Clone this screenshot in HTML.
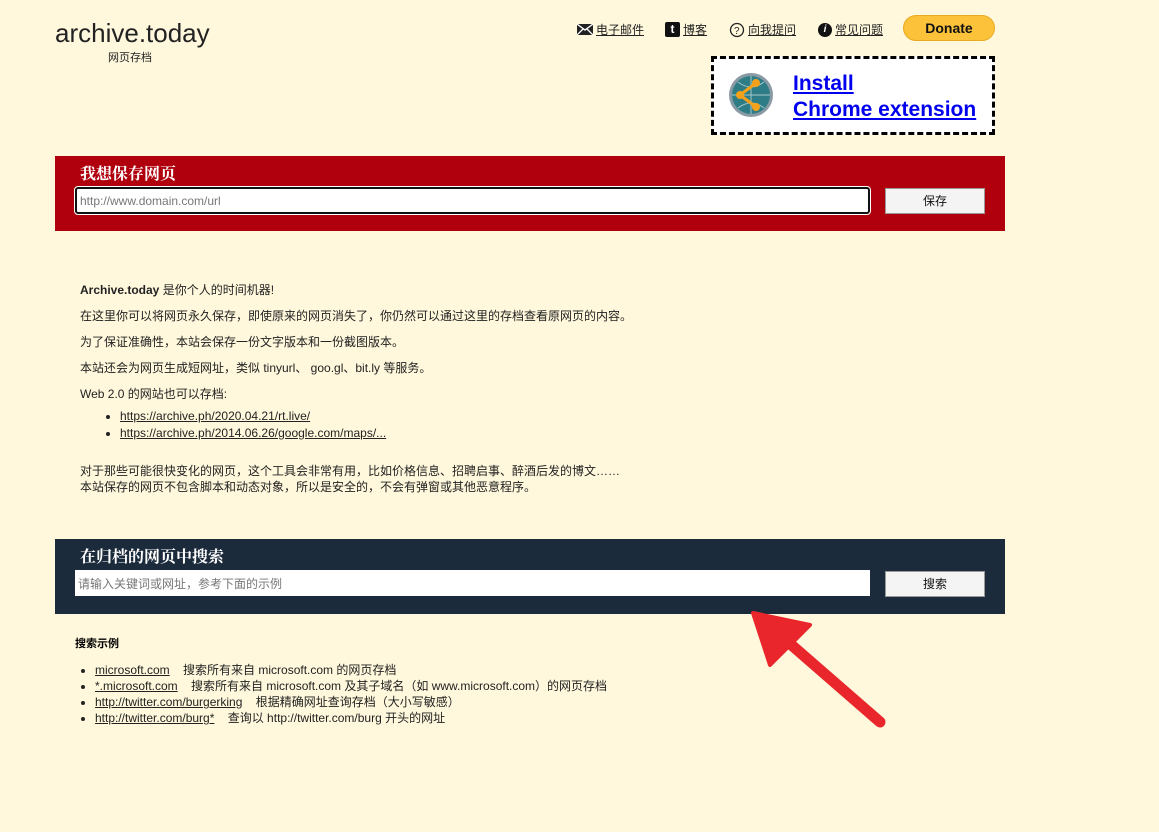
<!DOCTYPE html>
<html><head><meta charset="utf-8">
<style>
*{margin:0;padding:0;box-sizing:border-box}
body{width:1159px;height:832px;background:#fff8dc;font-family:"Liberation Sans","Noto Sans CJK SC",sans-serif;position:relative;overflow:hidden;color:#000}
.a{position:absolute}
a{color:#000}
.t{font-size:12px;color:#222}
.nav{font-size:12px;top:21px;display:flex;align-items:center;gap:3px}
.nav a{color:#222}
.band{position:absolute;left:55px;width:950px;height:75px}
.band h2{position:absolute;left:25px;top:5px;font-size:16px;color:#fff;font-family:"Noto Serif CJK SC",serif;font-weight:bold}
.inp{position:absolute;left:20px;width:795px;height:27px;background:#fff;font-size:12px;color:#777;padding:5px 3px}
.btn{position:absolute;left:830px;width:100px;height:26px;background:#f4f4f4;border:1px solid #999;font-size:12px;text-align:center;line-height:24px;color:#111}
ul{list-style:disc}
</style></head><body>
<div class="a" style="left:55px;top:18px;font-size:26px;color:#222">archive.today</div>
<div class="a" style="left:108px;top:49px;font-size:11px;color:#222">网页存档</div>

<div class="a nav" style="left:577px"><svg width="16" height="11"><rect width="16" height="11" fill="#222"/><path d="M0 0L8 6L16 0M0 11L6 5M16 11L10 5" stroke="#fff" stroke-width="1.3" fill="none"/></svg><a href="#">电子邮件</a></div>
<div class="a nav" style="left:665px"><span style="display:inline-block;width:15px;height:15px;background:#111;border-radius:2px;color:#fff;font-weight:bold;font-size:12px;text-align:center;line-height:15px">t</span><a href="#">博客</a></div>
<div class="a nav" style="left:729px"><svg width="16" height="16"><circle cx="8" cy="8" r="6.5" fill="none" stroke="#222" stroke-width="1.3"/><text x="5" y="12" font-size="10" fill="#222">?</text></svg><a href="#">向我提问</a></div>
<div class="a nav" style="left:818px"><span style="display:inline-block;width:14px;height:14px;background:#111;border-radius:50%;color:#fff;font-weight:bold;font-size:10px;text-align:center;line-height:14px;font-style:italic">i</span><a href="#">常见问题</a></div>
<div class="a" style="left:903px;top:15px;width:92px;height:26px;background:#fcc23a;border-radius:13px;border:1px solid #e8aa20;text-align:center;font-weight:bold;font-size:14px;line-height:24px;color:#111">Donate</div>

<div class="a" style="left:711px;top:56px;width:284px;height:79px;background:#fff;border:3px dashed #000"></div>
<svg class="a" style="left:728px;top:72px" width="46" height="46"><circle cx="23" cy="23" r="22" fill="#8a9aa5"/><circle cx="23" cy="23" r="19" fill="#2e7d86"/><path d="M4 23H42M23 4V42M10 10Q23 20 36 10M10 36Q23 26 36 36" stroke="#a8c8c8" stroke-width="1" fill="none"/><path d="M28 11L12 23L28 35" stroke="#f5a21a" stroke-width="3" fill="none"/><circle cx="28" cy="11" r="4" fill="#f5a21a"/><circle cx="12" cy="23" r="4" fill="#f5a21a"/><circle cx="28" cy="35" r="4" fill="#f5a21a"/></svg>
<div class="a" style="left:793px;top:71px;font-size:21px;font-weight:bold;line-height:26px"><a href="#" style="color:#0000ee">Install<br>Chrome extension</a></div>

<div class="band" style="top:156px;background:#b0000d">
<h2>我想保存网页</h2>
<div class="inp" style="top:31px;border:2px solid #111;border-radius:3px;outline:1px solid #fff">http://www.domain.com/url</div>
<div class="btn" style="top:32px">保存</div>
</div>

<div class="a t" style="left:80px;top:277px;line-height:26px">
<div><b>Archive.today</b> 是你个人的时间机器!</div>
<div>在这里你可以将网页永久保存，即使原来的网页消失了，你仍然可以通过这里的存档查看原网页的内容。</div>
<div>为了保证准确性，本站会保存一份文字版本和一份截图版本。</div>
<div>本站还会为网页生成短网址，类似 tinyurl、 goo.gl、bit.ly 等服务。</div>
<div>Web 2.0 的网站也可以存档:</div>
</div>
<ul class="a t" style="left:120px;top:408px;line-height:17px">
<li><a href="#" style="color:#222">https://archive.ph/2020.04.21/rt.live/</a></li>
<li><a href="#" style="color:#222">https://archive.ph/2014.06.26/google.com/maps/...</a></li>
</ul>
<div class="a t" style="left:80px;top:463px;line-height:16px">对于那些可能很快变化的网页，这个工具会非常有用，比如价格信息、招聘启事、醉酒后发的博文……<br>本站保存的网页不包含脚本和动态对象，所以是安全的，不会有弹窗或其他恶意程序。</div>

<div class="band" style="top:539px;background:#1c2b3c">
<h2>在归档的网页中搜索</h2>
<div class="inp" style="top:31px;height:26px">请输入关键词或网址，参考下面的示例</div>
<div class="btn" style="top:32px">搜索</div>
</div>

<div class="a" style="left:75px;top:635px;font-size:11px;font-weight:bold">搜索示例</div>
<ul class="a t" style="left:95px;top:662px;line-height:16px">
<li><a href="#" style="color:#222">microsoft.com</a>&nbsp;&nbsp;&nbsp; 搜索所有来自 microsoft.com 的网页存档</li>
<li><a href="#" style="color:#222">*.microsoft.com</a>&nbsp;&nbsp;&nbsp; 搜索所有来自 microsoft.com 及其子域名（如 www.microsoft.com）的网页存档</li>
<li><a href="#" style="color:#222">http://twitter.com/burgerking</a>&nbsp;&nbsp;&nbsp; 根据精确网址查询存档（大小写敏感）</li>
<li><a href="#" style="color:#222">http://twitter.com/burg*</a>&nbsp;&nbsp;&nbsp; 查询以 http://twitter.com/burg 开头的网址</li>
</ul>

<svg class="a" style="left:740px;top:605px" width="160" height="130"><path d="M140 117L40 30" stroke="#e8262b" stroke-width="11" stroke-linecap="round"/><path d="M13 8L70 20L30 60Z" fill="#e8262b" stroke="#e8262b" stroke-width="4" stroke-linejoin="round"/></svg>
</body></html>
